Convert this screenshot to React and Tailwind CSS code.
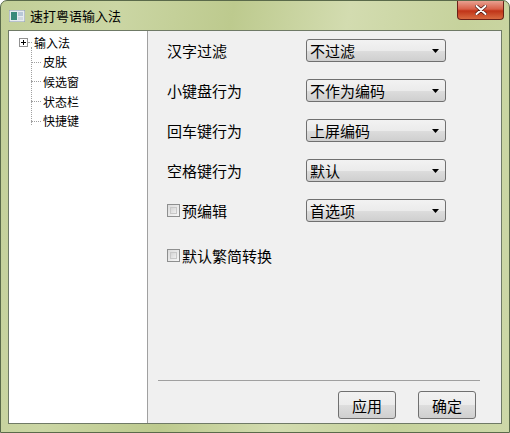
import React from "react";

const font = { fontFamily: '"Noto Sans CJK SC", "Noto Sans", sans-serif' };

const Combo = ({ value }) => (
  <div className="flex h-[23px] w-[140px] items-center justify-between rounded-[3px] border border-[#707070] bg-[linear-gradient(180deg,#f2f2f2_0%,#ebebeb_50%,#dddddd_51%,#cfcfcf_100%)] pl-[3px] pr-[6px]">
    <span className="text-[15px] leading-none text-black">{value}</span>
    <svg width="7" height="4" viewBox="0 0 7 4">
      <path d="M0 0 H7 L3.5 4 Z" fill="#000" />
    </svg>
  </div>
);

const Check = ({ label }) => (
  <div className="flex items-center">
    <div className="h-[13px] w-[13px] border border-[#8e8f8f] bg-[linear-gradient(135deg,#dcdcdc_0%,#f6f6f6_100%)] p-[2px]">
      <div className="h-full w-full border border-[#c8c8c8] bg-[linear-gradient(135deg,#d6d6d6,#eeeeee)]" />
    </div>
    <span className="ml-[2px] text-[15px] leading-none text-black">{label}</span>
  </div>
);

const Row = ({ label, value }) => (
  <div className="flex h-[23px] items-center">
    <span className="w-[139px] text-[15px] leading-none text-black">{label}</span>
    <Combo value={value} />
  </div>
);

const TreeItem = ({ text }) => (
  <div className="flex h-[19.6px] items-center">
    <div className="ml-[22px] w-[10px] border-t border-dotted border-[#a0a0a0]" />
    <span className="ml-[2px] text-[12px] leading-none text-black">{text}</span>
  </div>
);

export default function App() {
  return (
    <div
      className="relative flex h-[433px] w-[510px] flex-col overflow-hidden rounded-t-[7px] border border-[#5a6a4a] bg-[linear-gradient(100deg,#c2cf98_0%,#cbd6a4_20%,#bdca8e_40%,#d3dcb0_60%,#c6d29c_80%,#cdd8a8_100%)]"
      style={font}
    >
      {/* title bar */}
      <div className="flex h-[29px] shrink-0 items-center pl-[8px]">
        <svg width="16" height="12" viewBox="0 0 16 12">
          <rect x="0" y="0" width="16" height="12" fill="#e8ecf0" stroke="#8898a8" />
          <rect x="2" y="2" width="6" height="8" fill="#3a8a7a" />
          <rect x="9" y="2" width="5" height="4" fill="#b8c8d8" />
          <rect x="9" y="7" width="5" height="3" fill="#d0d8e0" />
        </svg>
        <span className="ml-[5px] text-[13px] leading-none text-black">速打粤语输入法</span>
      </div>
      <div className="absolute right-[5px] top-0 flex h-[19px] w-[47px] items-center justify-center rounded-b-[4px] border border-t-0 border-[#6a2018] bg-[linear-gradient(180deg,#e8a090_0%,#d86048_45%,#c03418_55%,#d86a40_100%)]">
        <svg width="12" height="10" viewBox="0 0 12 10">
          <path d="M1.5 1 L10.5 9 M10.5 1 L1.5 9" stroke="#4a1810" strokeWidth="3.4" strokeLinecap="round" />
          <path d="M1.5 1 L10.5 9 M10.5 1 L1.5 9" stroke="#ffffff" strokeWidth="2" strokeLinecap="round" />
        </svg>
      </div>

      {/* client */}
      <div className="mx-[7px] mb-[8px] flex flex-1 border border-[#6f7a66] bg-[#f0f0f0]">
        {/* tree */}
        <div className="w-[139px] shrink-0 border-r border-[#a0a0a0] bg-white pt-[2px]">
          <div className="relative">
            <div className="absolute left-[22px] top-[14px] h-[78px] border-l border-dotted border-[#a0a0a0]" />
            <div className="flex h-[19.6px] items-center">
              <div className="ml-[10px] flex h-[9px] w-[9px] items-center justify-center border border-[#919191] bg-white">
                <svg width="5" height="5" viewBox="0 0 5 5">
                  <path d="M0 2.5 H5 M2.5 0 V5" stroke="#000" strokeWidth="1" />
                </svg>
              </div>
              <div className="w-[4px] border-t border-dotted border-[#a0a0a0]" />
              <span className="ml-[2px] text-[12px] leading-none text-black">输入法</span>
            </div>
            <TreeItem text="皮肤" />
            <TreeItem text="候选窗" />
            <TreeItem text="状态栏" />
            <TreeItem text="快捷键" />
          </div>
        </div>

        {/* settings */}
        <div className="flex flex-1 flex-col pl-[19px] pr-[21px] pt-[8px]">
          <div className="flex flex-col gap-[17px]">
            <Row label="汉字过滤" value="不过滤" />
            <Row label="小键盘行为" value="不作为编码" />
            <Row label="回车键行为" value="上屏编码" />
            <Row label="空格键行为" value="默认" />
            <div className="flex h-[23px] items-center">
              <div className="w-[139px]">
                <Check label="预编辑" />
              </div>
              <Combo value="首选项" />
            </div>
          </div>
          <div className="mt-[26px] flex h-[14px] items-center">
            <Check label="默认繁简转换" />
          </div>
          <div className="flex-1" />
          <div className="-ml-[9px] border-t border-[#a0a0a0] border-b-white" />
          <div className="mt-[10px] mb-[4px] flex justify-end gap-[22px] pr-[4px]">
            <button className="h-[28px] w-[58px] rounded-[3px] border border-[#707070] bg-[linear-gradient(180deg,#f2f2f2_0%,#ebebeb_50%,#dddddd_51%,#cfcfcf_100%)] text-[15px] leading-none text-black">
              应用
            </button>
            <button className="h-[28px] w-[58px] rounded-[3px] border border-[#707070] bg-[linear-gradient(180deg,#f2f2f2_0%,#ebebeb_50%,#dddddd_51%,#cfcfcf_100%)] text-[15px] leading-none text-black">
              确定
            </button>
          </div>
        </div>
      </div>
    </div>
  );
}
